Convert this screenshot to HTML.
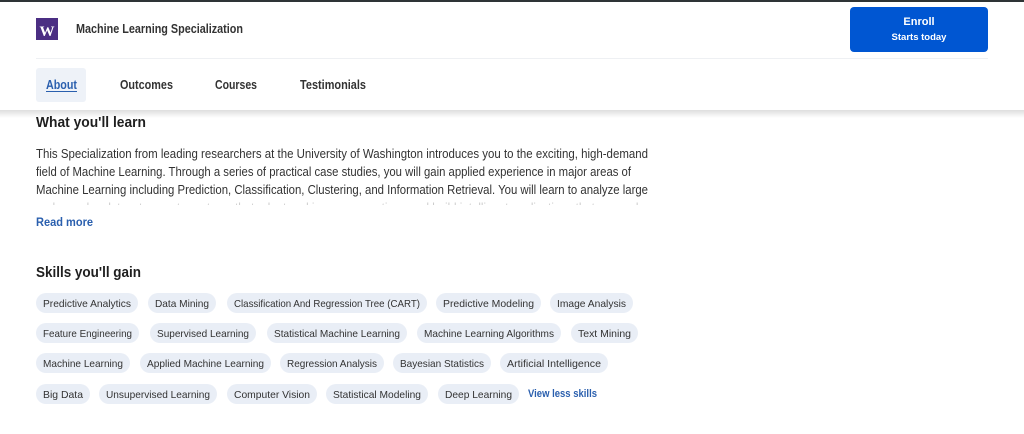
<!DOCTYPE html>
<html><head><meta charset="utf-8"><style>
html,body{margin:0;padding:0;background:#fff;width:1024px;height:434px;overflow:hidden}
svg{display:block}
text{font-family:"Liberation Sans",sans-serif}
</style></head><body>
<svg width="1024" height="434" viewBox="0 0 1024 434" xmlns="http://www.w3.org/2000/svg">
<defs>
<linearGradient id="sh" x1="0" y1="0" x2="0" y2="1"><stop offset="0" stop-color="#000" stop-opacity="0.13"/><stop offset="1" stop-color="#000" stop-opacity="0"/></linearGradient>
</defs>
<rect width="1024" height="434" fill="#fff"/>
<text x="36" y="127" font-size="15" font-weight="bold" fill="#1f1f1f" textLength="110" lengthAdjust="spacingAndGlyphs">What you'll learn</text>
<g font-size="12.5" fill="#333">
<text x="36" y="158" textLength="612" lengthAdjust="spacingAndGlyphs">This Specialization from leading researchers at the University of Washington introduces you to the exciting, high-demand</text>
<text x="36" y="176" textLength="595" lengthAdjust="spacingAndGlyphs">field of Machine Learning. Through a series of practical case studies, you will gain applied experience in major areas of</text>
<text x="36" y="194" textLength="612" lengthAdjust="spacingAndGlyphs">Machine Learning including Prediction, Classification, Clustering, and Information Retrieval. You will learn to analyze large</text>
<text x="36" y="212" textLength="612" lengthAdjust="spacingAndGlyphs">and complex datasets, create systems that adapt and improve over time, and build intelligent applications that can make</text>
</g>
<rect x="30" y="200" width="640" height="14" fill="#fff" opacity="0.75"/>
<rect x="30" y="205" width="640" height="10" fill="#fff"/>
<text x="36" y="226" font-size="12" font-weight="bold" fill="#2a5fae" textLength="57" lengthAdjust="spacingAndGlyphs">Read more</text>
<text x="36" y="277" font-size="15" font-weight="bold" fill="#1f1f1f" textLength="105" lengthAdjust="spacingAndGlyphs">Skills you'll gain</text>
<g font-size="10.5" fill="#333" text-anchor="start">
<g transform="translate(0,293)">
<rect x="36" width="102" height="20" rx="10" fill="#e9eef6"/><text x="43" y="14" textLength="88" lengthAdjust="spacingAndGlyphs">Predictive Analytics</text>
<rect x="148" width="68" height="20" rx="10" fill="#e9eef6"/><text x="155" y="14" textLength="54" lengthAdjust="spacingAndGlyphs">Data Mining</text>
<rect x="227" width="200" height="20" rx="10" fill="#e9eef6"/><text x="234" y="14" textLength="186" lengthAdjust="spacingAndGlyphs">Classification And Regression Tree (CART)</text>
<rect x="436" width="105" height="20" rx="10" fill="#e9eef6"/><text x="443" y="14" textLength="91" lengthAdjust="spacingAndGlyphs">Predictive Modeling</text>
<rect x="550" width="83" height="20" rx="10" fill="#e9eef6"/><text x="557" y="14" textLength="69" lengthAdjust="spacingAndGlyphs">Image Analysis</text>
</g>
<g transform="translate(0,323)">
<rect x="36" width="103" height="20" rx="10" fill="#e9eef6"/><text x="43" y="14" textLength="89" lengthAdjust="spacingAndGlyphs">Feature Engineering</text>
<rect x="150" width="106" height="20" rx="10" fill="#e9eef6"/><text x="157" y="14" textLength="92" lengthAdjust="spacingAndGlyphs">Supervised Learning</text>
<rect x="267" width="140" height="20" rx="10" fill="#e9eef6"/><text x="274" y="14" textLength="126" lengthAdjust="spacingAndGlyphs">Statistical Machine Learning</text>
<rect x="417" width="144" height="20" rx="10" fill="#e9eef6"/><text x="424" y="14" textLength="130" lengthAdjust="spacingAndGlyphs">Machine Learning Algorithms</text>
<rect x="571" width="67" height="20" rx="10" fill="#e9eef6"/><text x="578" y="14" textLength="53" lengthAdjust="spacingAndGlyphs">Text Mining</text>
</g>
<g transform="translate(0,353)">
<rect x="36" width="94" height="20" rx="10" fill="#e9eef6"/><text x="43" y="14" textLength="80" lengthAdjust="spacingAndGlyphs">Machine Learning</text>
<rect x="140" width="131" height="20" rx="10" fill="#e9eef6"/><text x="147" y="14" textLength="117" lengthAdjust="spacingAndGlyphs">Applied Machine Learning</text>
<rect x="280" width="104" height="20" rx="10" fill="#e9eef6"/><text x="287" y="14" textLength="90" lengthAdjust="spacingAndGlyphs">Regression Analysis</text>
<rect x="393" width="98" height="20" rx="10" fill="#e9eef6"/><text x="400" y="14" textLength="84" lengthAdjust="spacingAndGlyphs">Bayesian Statistics</text>
<rect x="500" width="108" height="20" rx="10" fill="#e9eef6"/><text x="507" y="14" textLength="94" lengthAdjust="spacingAndGlyphs">Artificial Intelligence</text>
</g>
<g transform="translate(0,384)">
<rect x="36" width="54" height="20" rx="10" fill="#e9eef6"/><text x="43" y="14" textLength="40" lengthAdjust="spacingAndGlyphs">Big Data</text>
<rect x="99" width="118" height="20" rx="10" fill="#e9eef6"/><text x="106" y="14" textLength="104" lengthAdjust="spacingAndGlyphs">Unsupervised Learning</text>
<rect x="227" width="90" height="20" rx="10" fill="#e9eef6"/><text x="234" y="14" textLength="76" lengthAdjust="spacingAndGlyphs">Computer Vision</text>
<rect x="326" width="102" height="20" rx="10" fill="#e9eef6"/><text x="333" y="14" textLength="88" lengthAdjust="spacingAndGlyphs">Statistical Modeling</text>
<rect x="438" width="81" height="20" rx="10" fill="#e9eef6"/><text x="445" y="14" textLength="67" lengthAdjust="spacingAndGlyphs">Deep Learning</text>
<text x="528" y="13" font-size="11" font-weight="bold" fill="#2a5fae" textLength="69" lengthAdjust="spacingAndGlyphs">View less skills</text>
</g>
</g>
<rect x="0" y="110" width="1024" height="8" fill="url(#sh)"/>
<rect x="0" y="0" width="1024" height="110" fill="#fff"/>
<rect x="0" y="0" width="1024" height="2" fill="#2e3436"/>
<rect x="36" y="18" width="22" height="22" fill="#4b2e83"/>
<text x="47" y="36" font-size="15" font-weight="bold" fill="#fff" text-anchor="middle" style="font-family:'Liberation Serif',serif">W</text>
<text x="76" y="33" font-size="12.5" font-weight="bold" fill="#333" textLength="167" lengthAdjust="spacingAndGlyphs">Machine Learning Specialization</text>
<rect x="850" y="7" width="138" height="45" rx="4" fill="#0056d2"/>
<text x="919" y="25" font-size="11" font-weight="bold" fill="#fff" text-anchor="middle">Enroll</text>
<text x="919" y="40" font-size="9.5" font-weight="bold" fill="#fff" text-anchor="middle">Starts today</text>
<rect x="36" y="58" width="952" height="1" fill="#eef0f3"/>
<rect x="36" y="68" width="50" height="34" rx="3" fill="#eef2f8"/>
<g font-size="12.5" font-weight="bold" fill="#333">
<text x="46" y="89" fill="#2a5fae" textLength="31" lengthAdjust="spacingAndGlyphs">About</text>
<rect x="46" y="91" width="31" height="1" fill="#2a5fae"/>
<text x="120" y="89" textLength="53" lengthAdjust="spacingAndGlyphs">Outcomes</text>
<text x="215" y="89" textLength="42" lengthAdjust="spacingAndGlyphs">Courses</text>
<text x="300" y="89" textLength="66" lengthAdjust="spacingAndGlyphs">Testimonials</text>
</g>
</svg>
</body></html>
